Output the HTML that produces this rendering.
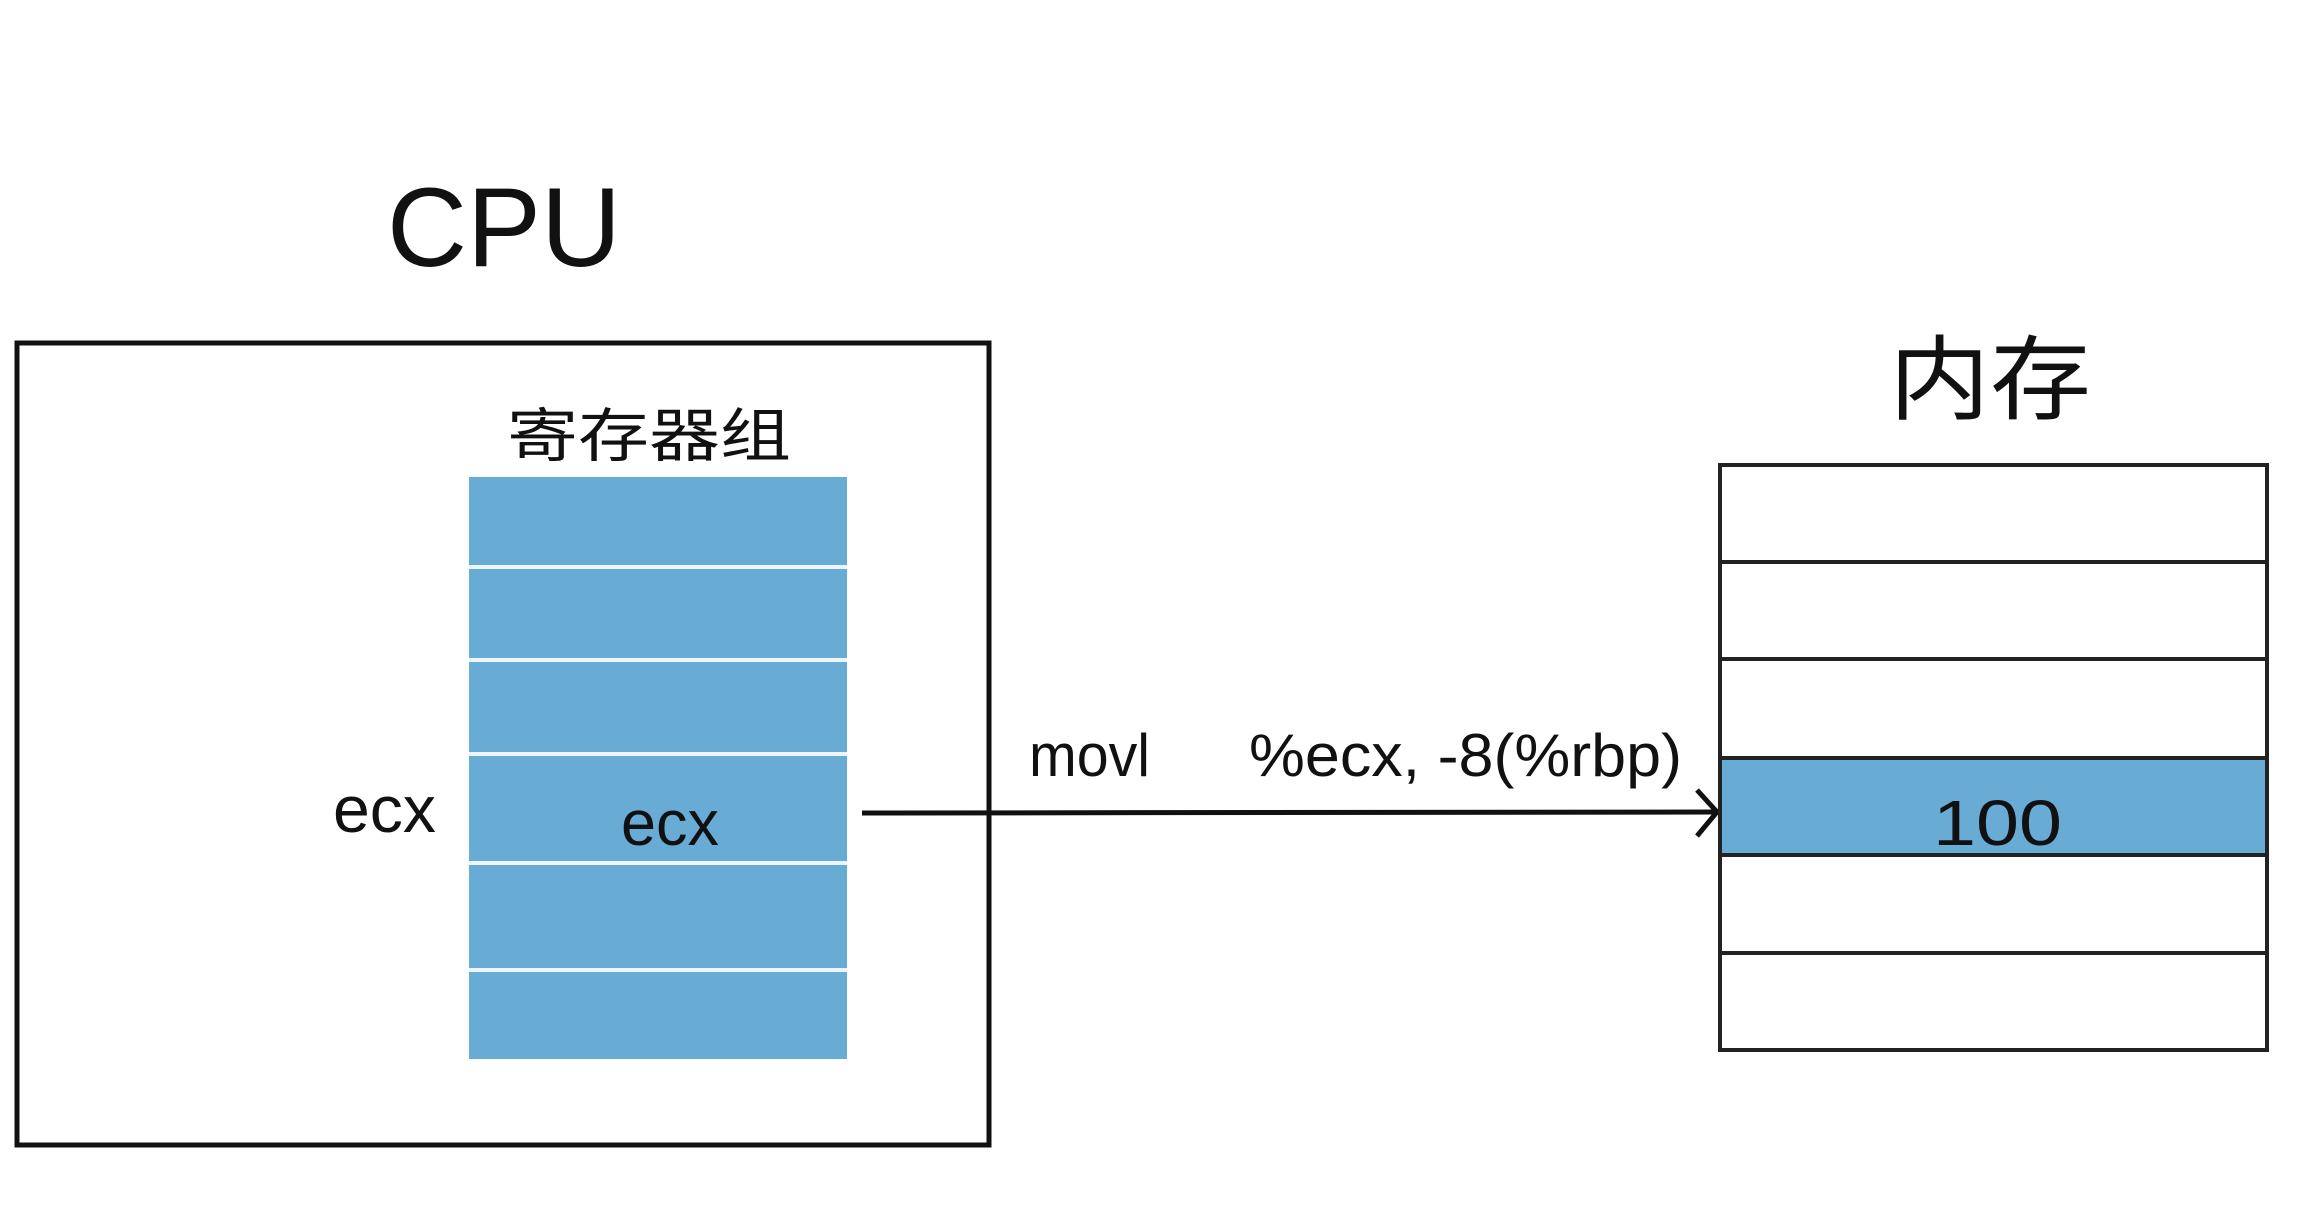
<!DOCTYPE html>
<html><head><meta charset="utf-8"><style>
html,body{margin:0;padding:0;background:#fff;width:2318px;height:1218px;overflow:hidden}
svg{display:block}
text{font-family:"Liberation Sans","Noto Sans CJK SC",sans-serif;fill:#111}
</style></head><body>
<svg width="2318" height="1218" viewBox="0 0 2318 1218" xmlns="http://www.w3.org/2000/svg">
<rect width="2318" height="1218" fill="#fff"/>
<text x="387" y="266" font-size="112" textLength="234" lengthAdjust="spacingAndGlyphs">CPU</text>
<rect x="17" y="343" width="972" height="802" fill="none" stroke="#111" stroke-width="5"/>
<text x="507" y="456" font-size="58" textLength="284" lengthAdjust="spacingAndGlyphs" font-family="Noto Sans CJK SC">寄存器组</text>
<rect x="469" y="477" width="378" height="582" fill="#68acd5"/>
<g stroke="#eef4f8" stroke-width="4">
<line x1="469" y1="567" x2="847" y2="567"/>
<line x1="469" y1="660" x2="847" y2="660"/>
<line x1="469" y1="754" x2="847" y2="754"/>
<line x1="469" y1="863" x2="847" y2="863"/>
<line x1="469" y1="970" x2="847" y2="970"/>
</g>
<text x="333" y="832" font-size="66" textLength="103" lengthAdjust="spacingAndGlyphs">ecx</text>
<text x="621" y="845" font-size="64" textLength="98" lengthAdjust="spacingAndGlyphs">ecx</text>
<text x="1029" y="776" font-size="60" textLength="121" lengthAdjust="spacingAndGlyphs">movl</text>
<text x="1249" y="776" font-size="60" textLength="433" lengthAdjust="spacingAndGlyphs">%ecx, -8(%rbp)</text>
<path d="M862 813 L1717 812" stroke="#111" stroke-width="5" fill="none"/>
<path d="M1697 790 L1717 812 L1697 836" stroke="#111" stroke-width="5" fill="none"/>
<text x="1889" y="412" font-size="92" textLength="202" lengthAdjust="spacingAndGlyphs" font-family="Noto Sans CJK SC">内存</text>
<rect x="1720" y="758" width="547" height="97" fill="#68acd5"/>
<rect x="1720" y="465" width="547" height="585" fill="none" stroke="#222" stroke-width="4"/>
<g stroke="#222" stroke-width="4">
<line x1="1720" y1="562" x2="2267" y2="562"/>
<line x1="1720" y1="659" x2="2267" y2="659"/>
<line x1="1720" y1="758" x2="2267" y2="758"/>
<line x1="1720" y1="855" x2="2267" y2="855"/>
<line x1="1720" y1="953" x2="2267" y2="953"/>
</g>
<text x="1933" y="845" font-size="64" textLength="129" lengthAdjust="spacingAndGlyphs">100</text>
</svg>
</body></html>
